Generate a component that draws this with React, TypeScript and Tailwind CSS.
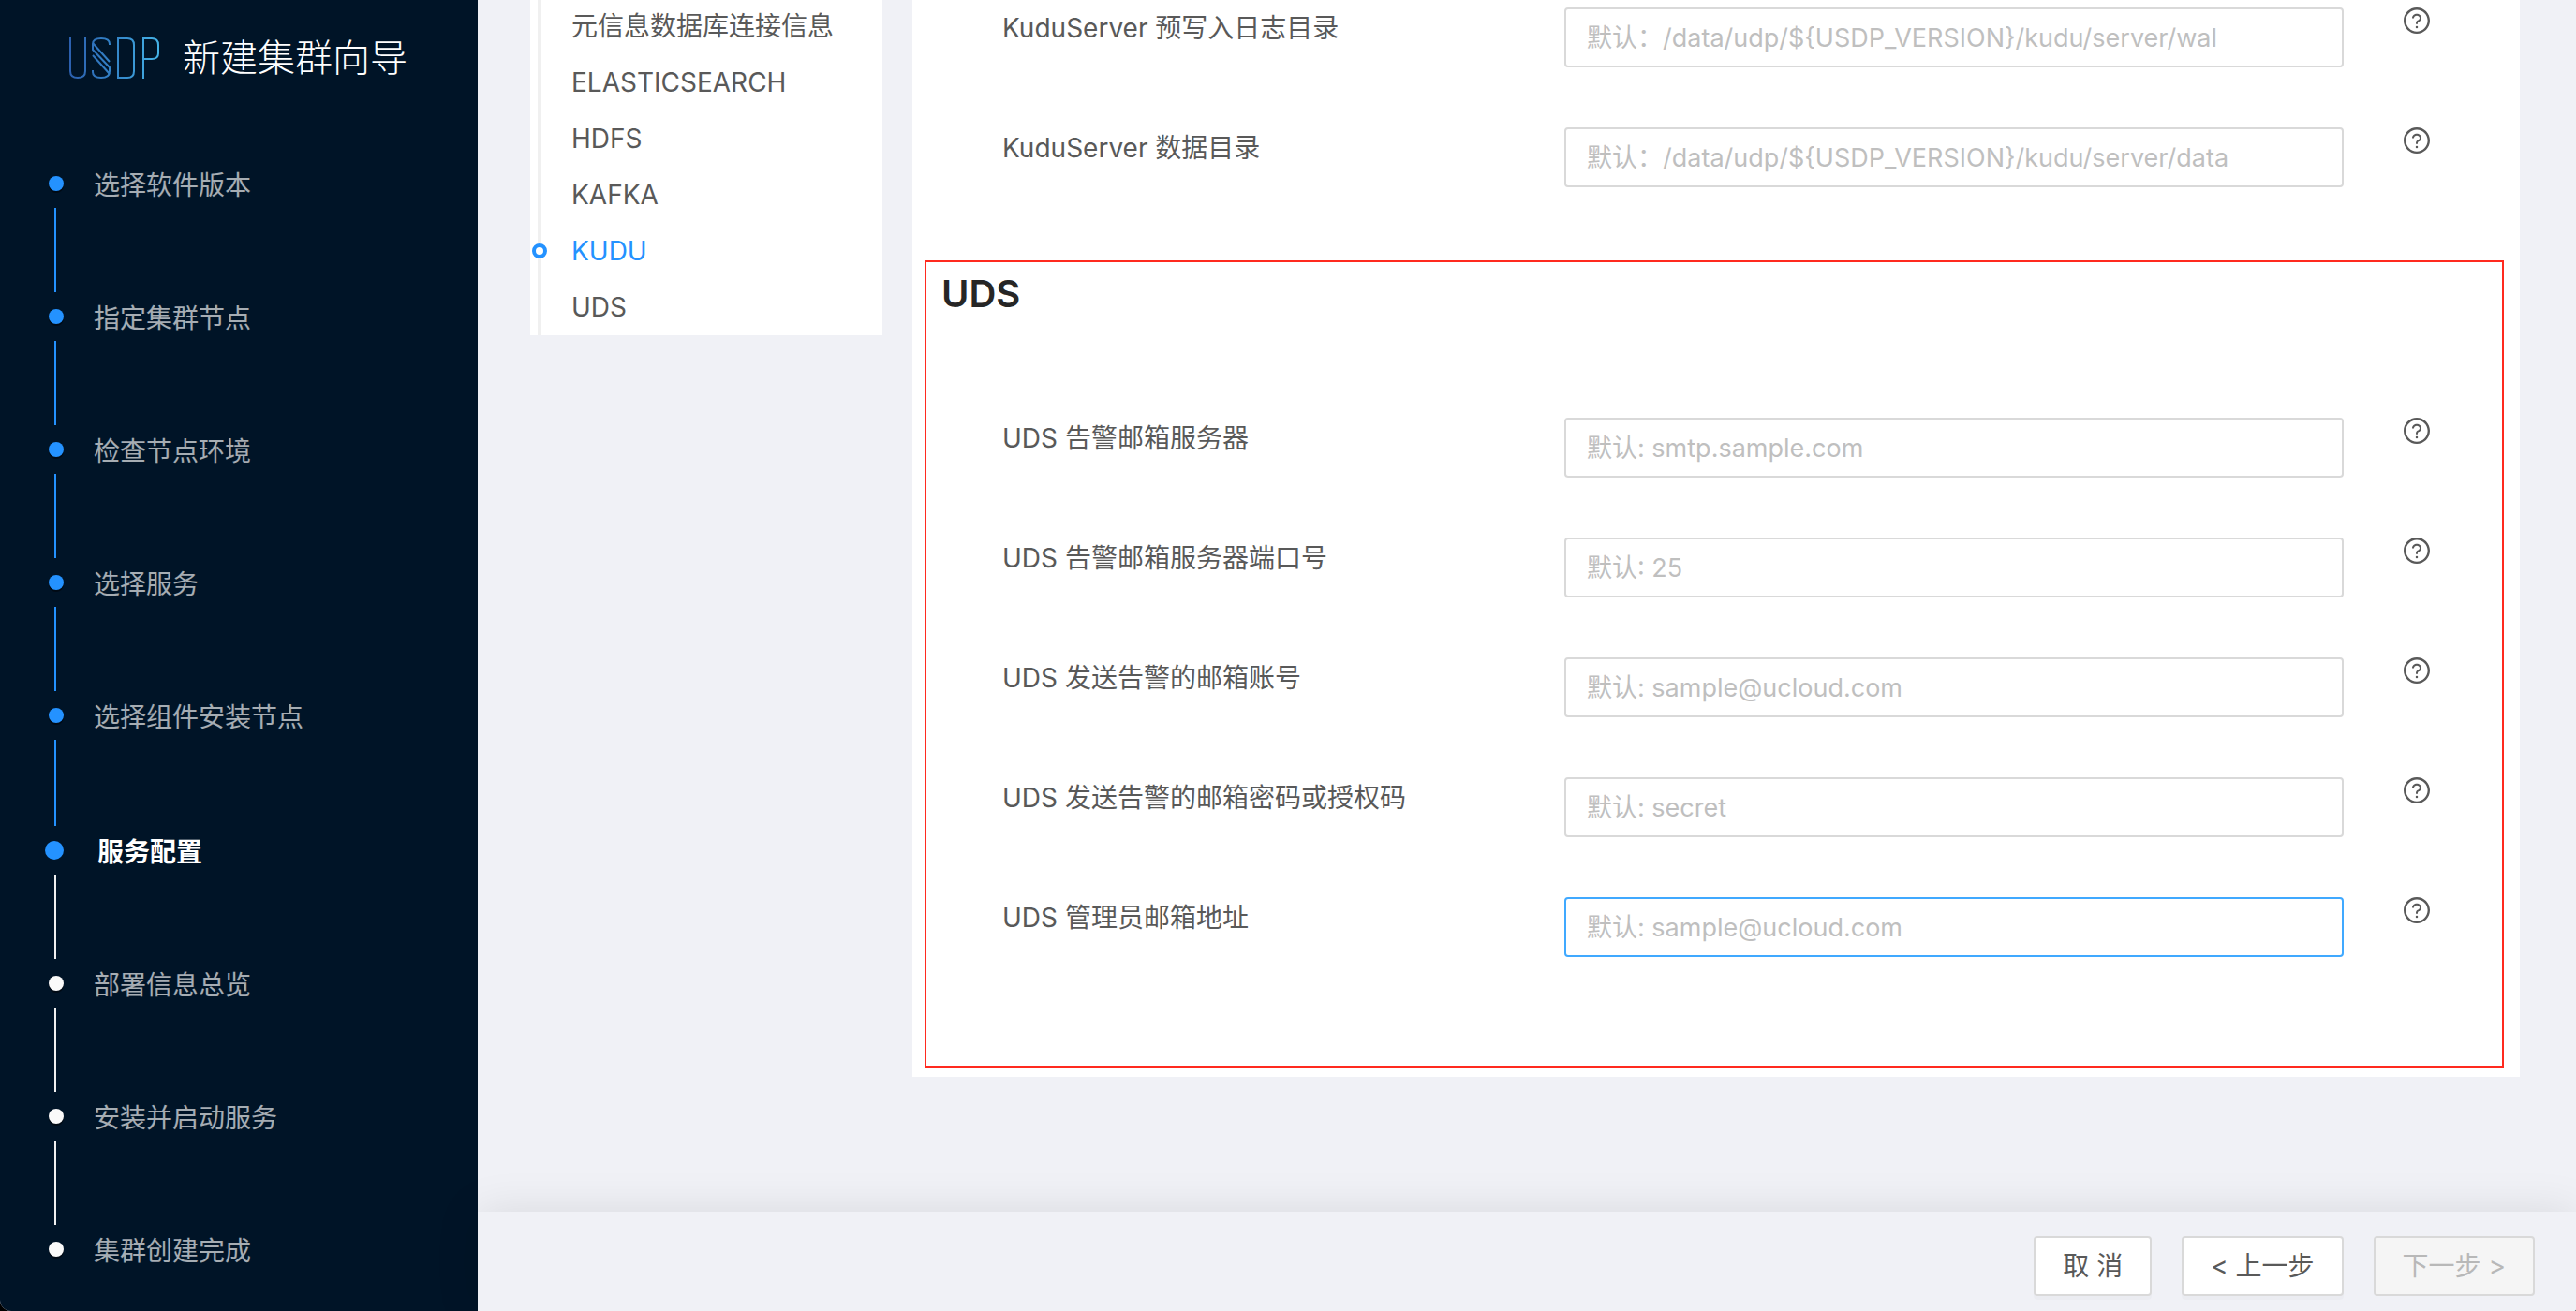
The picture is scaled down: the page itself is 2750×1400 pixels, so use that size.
import React from "react";

type StepState = "done" | "active" | "todo";

const steps: { title: string; state: StepState }[] = [
  { title: "选择软件版本", state: "done" },
  { title: "指定集群节点", state: "done" },
  { title: "检查节点环境", state: "done" },
  { title: "选择服务", state: "done" },
  { title: "选择组件安装节点", state: "done" },
  { title: "服务配置", state: "active" },
  { title: "部署信息总览", state: "todo" },
  { title: "安装并启动服务", state: "todo" },
  { title: "集群创建完成", state: "todo" },
];

const anchors = ["元信息数据库连接信息", "ELASTICSEARCH", "HDFS", "KAFKA", "KUDU", "UDS"];

interface Field {
  id: string;
  label: string;
  placeholder: string;
  highlighted?: boolean;
}

const kuduFields: Field[] = [
  { id: "kudu-wal", label: "KuduServer 预写入日志目录", placeholder: "默认：/data/udp/${USDP_VERSION}/kudu/server/wal" },
  { id: "kudu-data", label: "KuduServer 数据目录", placeholder: "默认：/data/udp/${USDP_VERSION}/kudu/server/data" },
];

const udsFields: Field[] = [
  { id: "uds-host", label: "UDS 告警邮箱服务器", placeholder: "默认: smtp.sample.com" },
  { id: "uds-port", label: "UDS 告警邮箱服务器端口号", placeholder: "默认: 25" },
  { id: "uds-account", label: "UDS 发送告警的邮箱账号", placeholder: "默认: sample@ucloud.com" },
  { id: "uds-secret", label: "UDS 发送告警的邮箱密码或授权码", placeholder: "默认: secret" },
  { id: "uds-admin", label: "UDS 管理员邮箱地址", placeholder: "默认: sample@ucloud.com", highlighted: true },
];

function Logo() {
  return (
    <svg viewBox="0 0 98 46" className="h-[46px] w-[98px]" fill="none" stroke="url(#logo-gradient)" strokeWidth="2" role="img" aria-label="USDP">
      <defs>
        <linearGradient id="logo-gradient" gradientUnits="userSpaceOnUse" x1="0" y1="0" x2="98" y2="0">
          <stop offset="0" stopColor="#2c5fae" />
          <stop offset="0.5" stopColor="#3384c8" />
          <stop offset="1" stopColor="#45b4e8" />
        </linearGradient>
      </defs>
      <path d="M2 1v36q0 7 8 7t8-7V1" />
      <path d="M44 9V8q0-6-9-6t-9 6v6l18 19v4q0 7-9 7t-9-6v-2" />
      <path d="M26 7l18 20M26 20l18 20" />
      <path d="M53 2h10q7 0 7 7v28q0 7-7 7H53z" />
      <path d="M80 45V2h9q7 0 7 7v9q0 6-7 6h-9" />
    </svg>
  );
}

function HelpIcon() {
  return (
    <svg viewBox="64 64 896 896" className="size-7" fill="currentColor" aria-hidden="true">
      <path d="M512 64C264.6 64 64 264.6 64 512s200.6 448 448 448 448-200.6 448-448S759.4 64 512 64zm0 820c-205.4 0-372-166.6-372-372s166.6-372 372-372 372 166.6 372 372-166.6 372-372 372z" />
      <path d="M623.6 316.7C593.6 290.4 554 276 512 276s-81.6 14.5-111.6 40.7C369.2 344 352 380.7 352 420v7.6c0 4.4 3.6 8 8 8h48c4.4 0 8-3.6 8-8V420c0-44.1 43.1-80 96-80s96 35.9 96 80c0 31.1-22 59.6-56.1 72.7-21.2 8.1-39.2 22.3-52.1 40.9-13.1 19-19.9 41.8-19.9 64.9V620c0 4.4 3.6 8 8 8h48c4.4 0 8-3.6 8-8v-22.7a48.3 48.3 0 0 1 30.9-44.8c59-22.7 97.1-74.7 97.1-132.5.1-39.3-17.1-76-48.3-103.3zM472 732a40 40 0 1 0 80 0 40 40 0 1 0-80 0z" />
    </svg>
  );
}

function StepItem({ title, state, beforeActive, last }: { title: string; state: StepState; beforeActive: boolean; last: boolean }) {
  const active = state === "active";
  return (
    <li className="flex" aria-current={active ? "step" : undefined}>
      <div className="flex w-5 flex-col">
        <span
          className={
            active
              ? "size-5 rounded-full bg-[#2492ff]"
              : state === "done"
                ? "size-4 self-end rounded-full bg-[#2492ff] shadow-[0_2px_0_#000a14]"
                : "size-4 self-end rounded-full bg-[#fafafa] shadow-[0_2px_0_#000a14]"
          }
        />
        {!last && (
          <span
            className={
              active
                ? "mt-4 mb-[18px] ml-2.5 h-[90px] w-0.5 bg-[#f0f0f0]"
                : beforeActive
                  ? "mt-[18px] mb-4 ml-2.5 h-[92px] w-0.5 bg-[#2492ff]"
                  : state === "done"
                    ? "mt-[18px] mb-[18px] ml-2.5 h-[90px] w-0.5 bg-[#2492ff]"
                    : "mt-[18px] mb-[18px] ml-2.5 h-[90px] w-0.5 bg-[#f0f0f0]"
            }
          />
        )}
      </div>
      <span className={active ? "ml-9 text-[28px] leading-6 font-bold text-white" : "ml-8 text-[28px] leading-5 text-white/65"}>{title}</span>
    </li>
  );
}

function FieldRow({ field }: { field: Field }) {
  return (
    <div className="grid grid-cols-[600fr_832fr_92fr] items-start">
      <label htmlFor={field.id} className="leading-11">
        {field.label}
      </label>
      <input
        id={field.id}
        type="text"
        placeholder={field.placeholder}
        className={
          field.highlighted
            ? "h-16 w-full rounded-sm border-2 border-[#40a9ff] bg-white px-[22px] text-[27px] placeholder:text-[#bfbfbf] focus:outline-none"
            : "h-16 w-full rounded-sm border-2 border-[#d9d9d9] bg-white px-[22px] text-[27px] placeholder:text-[#bfbfbf] focus:border-[#40a9ff] focus:outline-none"
        }
      />
      <button type="button" aria-label={field.label + " 说明"} className="justify-self-end">
        <HelpIcon />
      </button>
    </div>
  );
}

export default function App() {
  return (
    <div className="bg-black">
      <div className="flex min-h-screen overflow-hidden rounded-br-xs rounded-bl-xl bg-[#f0f1f6] font-[Inter,'Noto_Sans_CJK_SC',sans-serif] text-[28px] text-[#595959]">
        <aside className="w-[510px] shrink-0 bg-[#001427]">
          <div className="flex items-center gap-6 pt-[38px] pl-[73px]">
            <Logo />
            <h1 className="text-[40px] leading-12 font-light text-white">新建集群向导</h1>
          </div>
          <ol className="mt-[102px] pl-12">
            {steps.map((s, i) => (
              <StepItem key={s.title} title={s.title} state={s.state} beforeActive={steps[i + 1]?.state === "active"} last={i === steps.length - 1} />
            ))}
          </ol>
        </aside>

        <div className="flex min-w-0 flex-1 flex-col">
          <main className="flex items-start gap-8 pr-[60px] pl-14">
            <nav className="w-[376px] shrink-0 bg-white pl-2">
              <ul className="flex flex-col gap-6 border-l-4 border-[#f0f0f0] pt-2.5 pb-3 pl-8">
                {anchors.map((a) => (
                  <li key={a} className="relative h-9 leading-9">
                    {a === "KUDU" && <span className="absolute top-2.5 -left-[42px] size-4 rounded-full border-4 border-[#2492ff] bg-white" />}
                    <a href={"#" + a} className={a === "KUDU" ? "text-[#2492ff]" : ""}>
                      {a}
                    </a>
                  </li>
                ))}
              </ul>
            </nav>

            <form className="min-w-0 flex-1 bg-white pb-2.5">
              <section className="flex flex-col gap-16 px-24 pt-2">
                {kuduFields.map((f) => (
                  <FieldRow key={f.id} field={f} />
                ))}
              </section>
              <section id="UDS" className="mt-[78px] mr-[17px] ml-[13px] border-2 border-[#ff2a1f] pt-3.5 pb-[116px]">
                <h2 className="pl-4 text-[40px] leading-10 font-semibold text-[#262626]">UDS</h2>
                <div className="mt-28 flex flex-col gap-16 pr-[77px] pl-[81px]">
                  {udsFields.map((f) => (
                    <FieldRow key={f.id} field={f} />
                  ))}
                </div>
              </section>
            </form>
          </main>

          <footer className="mt-auto flex justify-end gap-8 bg-[#f0f1f6] pt-[26px] pr-11 pb-4 shadow-[0_0_48px_rgba(0,0,0,0.1)]">
            <button type="button" className="h-16 rounded-sm border-2 border-[#d9d9d9] bg-white px-[29px] shadow-[0_4px_0_rgba(0,0,0,0.02)]">
              取 消
            </button>
            <button type="button" className="h-16 rounded-sm border-2 border-[#d9d9d9] bg-white px-[29px] shadow-[0_4px_0_rgba(0,0,0,0.02)]">
              &lt; 上一步
            </button>
            <button type="button" disabled className="h-16 rounded-sm border-2 border-[#d9d9d9] bg-[#f5f5f5] px-[29px] text-[#b8b8b8]">
              下一步 &gt;
            </button>
          </footer>
        </div>
      </div>
    </div>
  );
}
